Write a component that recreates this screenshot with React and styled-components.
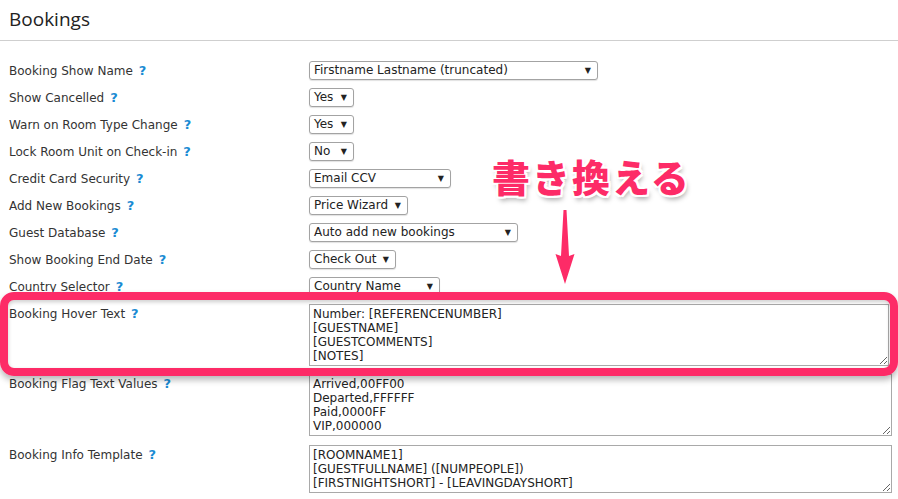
import React from 'react';
import styled, { createGlobalStyle } from 'styled-components';

const GlobalStyle = createGlobalStyle`
  html, body {
    margin: 0;
    padding: 0;
    background: #fff;
  }

  body {
    font-family: "DejaVu Sans", Verdana, sans-serif;
    font-size: 12px;
    color: #333;
  }
`;

const pink = '#fd2b67';

const Page = styled.div`
  position: relative;
  width: 898px;
  height: 499px;
  overflow: hidden;
`;

const Header = styled.div`
  height: 40px;
  padding: 0 9px;
  border-bottom: 1px solid #cfcfcf;

  h1 {
    margin: 0;
    padding-top: 6px;
    font-family: "Open Sans", sans-serif;
    font-size: 19px;
    font-weight: 400;
    line-height: 26px;
    color: #222;
  }
`;

const Form = styled.div`
  display: grid;
  grid-template-columns: 300px 1fr;
  padding: 16px 9px 0 9px;
`;

const Label = styled.div`
  display: flex;
  align-items: ${(p) => (p.top ? 'flex-start' : 'center')};
  height: ${(p) => (p.top ? 'auto' : '27px')};
  padding-top: ${(p) => (p.top ? '2px' : '0')};
  margin-top: ${(p) => p.offset || 0}px;
  white-space: nowrap;
  line-height: 16px;
`;

const Help = styled.span`
  margin-left: 6px;
  color: #1a8bd3;
  font-weight: bold;
  font-size: 13px;
`;

const Field = styled.div`
  display: flex;
  align-items: ${(p) => (p.top ? 'flex-start' : 'center')};
  min-height: ${(p) => (p.top ? '0' : '27px')};
  margin-top: ${(p) => p.offset || 0}px;
`;

const SelectBox = styled.div`
  position: relative;
  box-sizing: border-box;
  width: ${(p) => p.width}px;
  height: 19px;
  padding: 0 16px 0 4px;
  border: 1px solid #a3a3a3;
  border-radius: 3px;
  box-shadow: 0 1px 1px rgba(0, 0, 0, 0.12);
  background: #fff;
  line-height: 17px;
  color: #222;
  white-space: nowrap;

  &::after {
    content: '▼';
    position: absolute;
    right: 6px;
    top: 0;
    font-size: 8px;
    line-height: 17px;
    color: #222;
  }
`;

const TextArea = styled.textarea`
  box-sizing: border-box;
  display: block;
  width: ${(p) => p.width}px;
  height: ${(p) => p.rows * 14 + 6}px;
  margin: 0;
  padding: 2px 3px;
  border: 1px solid #a9a9a9;
  font-family: "DejaVu Sans", Verdana, sans-serif;
  font-size: 12px;
  line-height: 14px;
  color: #222;
  overflow: hidden;
  resize: both;
  outline: none;
`;

/* callout drawn on top of the form */
const Highlight = styled.div`
  position: absolute;
  left: 0;
  top: 292px;
  width: 898px;
  height: 84px;
  box-sizing: border-box;
  border: 8px solid ${pink};
  border-radius: 14px;
  box-shadow: 0 4px 6px rgba(0, 0, 0, 0.28), inset 0 2px 4px rgba(0, 0, 0, 0.2);
  pointer-events: none;
`;

const Note = styled.div`
  position: absolute;
  left: 492px;
  top: 150px;
  font-family: "Noto Sans CJK JP", sans-serif;
  font-size: 38px;
  font-weight: 900;
  line-height: 52px;
  letter-spacing: 2px;
  color: ${pink};
  text-shadow:
    2px 0 0 #fff, -2px 0 0 #fff, 0 2px 0 #fff, 0 -2px 0 #fff,
    2px 2px 0 #fff, -2px -2px 0 #fff, 2px -2px 0 #fff, -2px 2px 0 #fff,
    2px 4px 5px rgba(0, 0, 0, 0.35);
`;

const Arrow = styled.svg`
  position: absolute;
  left: 545px;
  top: 208px;
  filter: drop-shadow(0 0 1px rgba(255, 255, 255, 0.9));
`;

const selects = [
  ['Booking Show Name', 'Firstname Lastname (truncated)', 289],
  ['Show Cancelled', 'Yes', 45],
  ['Warn on Room Type Change', 'Yes', 45],
  ['Lock Room Unit on Check-in', 'No', 45],
  ['Credit Card Security', 'Email CCV', 142],
  ['Add New Bookings', 'Price Wizard', 99],
  ['Guest Database', 'Auto add new bookings', 209],
  ['Show Booking End Date', 'Check Out', 87],
  ['Country Selector', 'Country Name', 131],
];

const areas = [
  {
    label: 'Booking Hover Text',
    rows: 4,
    width: 580,
    offset: 4,
    value: 'Number: [REFERENCENUMBER]\n[GUESTNAME]\n[GUESTCOMMENTS]\n[NOTES]',
  },
  {
    label: 'Booking Flag Text Values',
    rows: 4,
    width: 583,
    offset: 8,
    value: 'Arrived,00FF00\nDeparted,FFFFFF\nPaid,0000FF\nVIP,000000',
  },
  {
    label: 'Booking Info Template',
    rows: 3,
    width: 583,
    offset: 9,
    value: '[ROOMNAME1]\n[GUESTFULLNAME] ([NUMPEOPLE])\n[FIRSTNIGHTSHORT] - [LEAVINGDAYSHORT]',
  },
];

export default function App() {
  return (
    <>
      <GlobalStyle />
      <Page>
        <Header>
          <h1>Bookings</h1>
        </Header>

        <Form>
          {selects.map(([label, value, width]) => (
            <React.Fragment key={label}>
              <Label>
                {label}
                <Help>?</Help>
              </Label>
              <Field>
                <SelectBox width={width}>{value}</SelectBox>
              </Field>
            </React.Fragment>
          ))}

          {areas.map((a) => (
            <React.Fragment key={a.label}>
              <Label top offset={a.offset}>
                {a.label}
                <Help>?</Help>
              </Label>
              <Field top offset={a.offset}>
                <TextArea rows={a.rows} width={a.width} defaultValue={a.value} />
              </Field>
            </React.Fragment>
          ))}
        </Form>

        <Highlight />
        <Note>書き換える</Note>
        <Arrow width="40" height="80" viewBox="0 0 40 80">
          <path d="M18.5 2 L21.5 2 L24 48 L29.5 46 L20 76 L10.5 46 L16 48 Z" fill={pink} />
        </Arrow>
      </Page>
    </>
  );
}
